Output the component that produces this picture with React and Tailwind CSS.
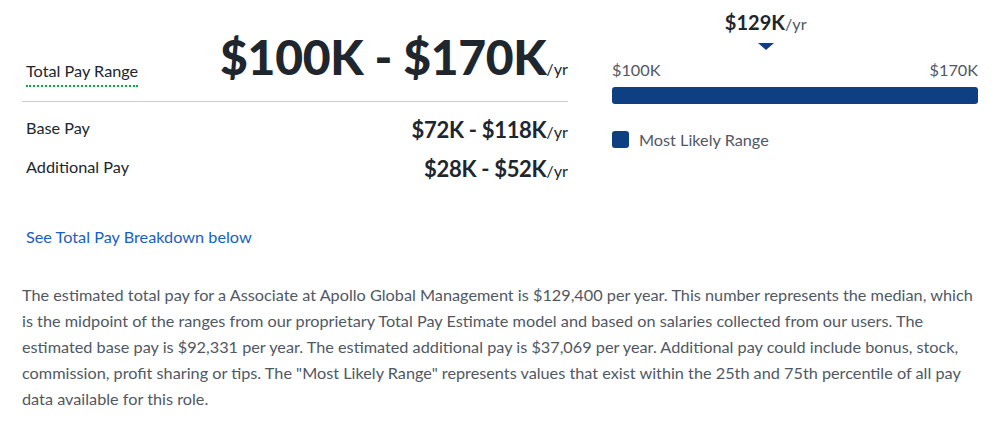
import React from 'react';

const low = 100000;
const high = 170000;
const median = 129400;

const Row = ({ label, range }) => (
  <div className="flex items-start justify-between pl-1 h-[28px]">
    <span className="mt-[1.5px] text-[16.25px] leading-[20px] text-[#20262e]">{label}</span>
    <span className="text-[22px] leading-[28px] font-bold text-[#20262e] tracking-[-0.3px]">
      {range}
      <span className="text-[16.25px] leading-none font-normal tracking-normal">/yr</span>
    </span>
  </div>
);

export default function App() {
  const pct = ((median - low) / (high - low)) * 100;

  return (
    <div className="w-[1002px] h-[437px] bg-white px-[22px] font-['Lato','Liberation_Sans',sans-serif] text-[#20262e]">
      <div className="flex gap-[44px]">
        {/* Left: ranges */}
        <div className="w-[546px]">
          <div className="flex items-start justify-between border-b border-[#cccccc] pt-[33px] pb-[14px]">
            <span className="ml-1 mt-[28px] text-[16.25px] leading-[20px] border-b-2 border-dotted border-[#0caa41] pb-[4px]">
              Total Pay Range
            </span>
            <span className="text-[48px] leading-[48px] font-black tracking-[-0.3px]">
              $100K - $170K
              <span className="text-[16.25px] leading-none font-normal tracking-normal">/yr</span>
            </span>
          </div>
          <div className="flex flex-col gap-[11px] pt-[14px]">
            <Row label="Base Pay" range="$72K - $118K" />
            <Row label="Additional Pay" range="$28K - $52K" />
          </div>
        </div>

        {/* Right: chart */}
        <div className="w-[366px] pt-[10px]">
          <div style={{ paddingLeft: `${pct}%` }}>
            <div className="w-0 flex flex-col items-center">
              <span className="whitespace-nowrap text-[20px] leading-[24px] font-bold">
                $129K<span className="text-[16.25px] leading-none font-normal text-[#505863]">/yr</span>
              </span>
              <svg width="16" height="7" viewBox="0 0 16 7" className="mt-[9px] shrink-0">
                <path d="M0 0 L16 0 L8 7 Z" fill="#0d3f82" />
              </svg>
            </div>
          </div>
          <div className="flex justify-between text-[16.25px] text-[#505863] mt-[10px] leading-[20px]">
            <span>$100K</span>
            <span>$170K</span>
          </div>
          <div className="h-[17px] rounded-[3px] bg-[#0d3f82] mt-[7px]" />
          <div className="flex items-start gap-[10px] mt-[26px]">
            <span className="mt-[1px] w-[17px] h-[17px] rounded-[3px] bg-[#0d3f82]" />
            <span className="text-[16.25px] leading-[20px] text-[#505863]">Most Likely Range</span>
          </div>
        </div>
      </div>

      <a className="block ml-1 mt-[44px] text-[16.25px] leading-[20px] text-[#1861bf]">See Total Pay Breakdown below</a>

      <p className="mt-[35px] text-[16.25px] leading-[26px] text-[#505863]">
        The estimated total pay for a Associate at Apollo Global Management is $129,400 per year. This number represents the median, which is the midpoint of the ranges from our proprietary Total Pay Estimate model and based on salaries collected from our users. The estimated base pay is $92,331 per year. The estimated additional pay is $37,069 per year. Additional pay could include bonus, stock, commission, profit sharing or tips. The "Most Likely Range" represents values that exist within the 25th and 75th percentile of all pay data available for this role.
      </p>
    </div>
  );
}
